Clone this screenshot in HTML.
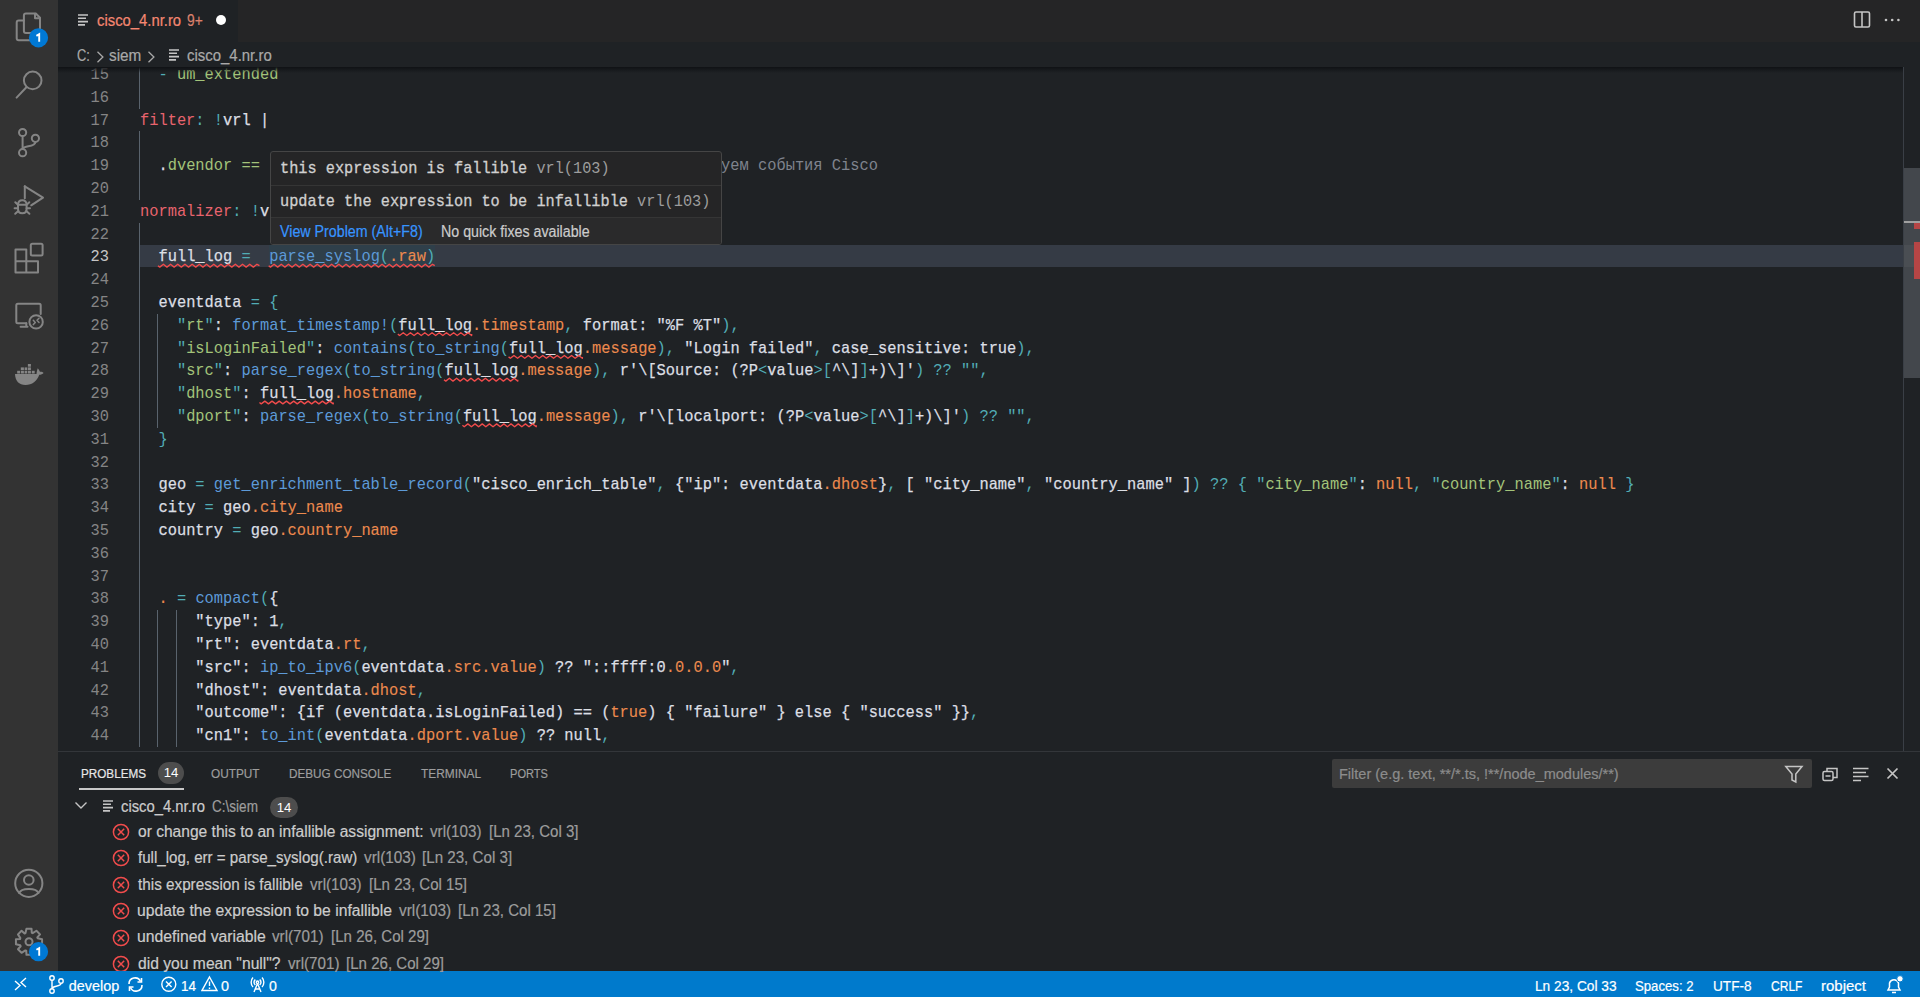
<!DOCTYPE html>
<html><head><meta charset="utf-8"><title>cisco_4.nr.ro</title>
<style>
*{margin:0;padding:0;box-sizing:border-box}
html,body{width:1920px;height:997px;overflow:hidden;background:#1f2225;font-family:"Liberation Sans",sans-serif;position:relative}
.a{position:absolute}
#act{left:0;top:0;width:58px;height:971px;background:#333333}
#tabbar{left:58px;top:0;width:1862px;height:41.5px;background:#252526}
#tab{left:58px;top:0;width:180px;height:41.5px;background:#1f2225}
.ttl{font-size:15.6px;color:#f48771;white-space:pre}
#crumbs{left:58px;top:41.5px;width:1862px;height:25.5px;background:#1f2225;font-size:15.6px;color:#a9a9a9;white-space:pre}
#editor{left:0;top:67px;width:1920px;height:684px;overflow:hidden}
#editor > *{margin-top:-67px}
#shadow{left:58px;top:67px;width:1845px;height:6px;background:linear-gradient(#101215,rgba(16,18,21,0))}
#nums{left:0;top:0;width:109px;height:751px}
.nm{position:absolute;left:0;height:22.8px;line-height:22.8px;font-family:"Liberation Mono",monospace;font-size:16.8px;color:#858585;text-align:right;width:109px;transform:translateY(1px) scaleX(0.9154);transform-origin:100% 0}
.nm.cur{color:#c6c6c6}
#code{left:139.5px;top:0;width:1764px;height:751px}
.ln{position:absolute;left:0;height:22.8px;line-height:22.8px;font-family:"Liberation Mono",monospace;font-size:16.4px;white-space:pre;color:#d7dae0;transform:translateY(0.7px) scaleX(0.93766);transform-origin:0 0;}
.w{color:#dcdfe4;-webkit-text-stroke:0.25px #dcdfe4}.c{color:#52adb5}.g{color:#a3c47a}.b{color:#5d9ad8}.o{color:#ec8a4e;-webkit-text-stroke:0.1px #ec8a4e}.r{color:#e8646e}.k{color:#7f848e}
.gd{position:absolute;width:1px;background:#59636d}
#curline{left:139.5px;top:245.4px;width:1763.5px;height:21.8px;background:#353b45}
#hovrange{left:268.7px;top:245.4px;width:166.1px;height:21.8px;background:#2f3f4a}
#scrollv{left:1903px;top:67px;width:17px;height:684px;border-left:1px solid #3a3f46}
#slider{left:1904px;top:168px;width:16px;height:210px;background:#43474c}
#hover{left:269.5px;top:150.5px;width:452px;height:94px;background:#252526;border:1px solid #454545;border-radius:3px;overflow:hidden}
.hrow{position:absolute;left:9.5px;font-family:"Liberation Mono",monospace;font-size:16.4px;color:#d0d0d0;white-space:pre;transform:scaleX(0.9309);transform-origin:0 0;-webkit-text-stroke:0.3px #d0d0d0}
.hrow .gry{-webkit-text-stroke:0}
.hsep{position:absolute;left:0;width:100%;height:1px;background:#353535}
.gry{color:#9d9d9d}
#hstat{left:0;top:66px;width:100%;height:27px;background:#2a2a2b;font-size:15px;white-space:pre}
#panel{left:58px;top:751px;width:1862px;height:220px;background:#1f2225;border-top:1px solid #33363a}
.ptab{position:absolute;top:12px;font-size:13.2px;color:#9d9d9d;white-space:pre;letter-spacing:0.1px}
.badge{position:absolute;background:#4d4d4d;color:#fff;border-radius:11px;text-align:center;font-size:13.2px}
.prow{position:absolute;left:0;height:26.4px;line-height:26.4px;font-size:15.6px;color:#cccccc;white-space:pre}
.prow .d{color:#9d9d9d}
#status{left:0;top:971px;width:1920px;height:26px;background:#007acc;color:#fff;font-size:14.4px;white-space:pre}
.st{position:absolute;top:0;height:26px;line-height:27px}
.tx{position:absolute;white-space:pre;line-height:normal;transform-origin:0 0;font-family:"Liberation Sans",sans-serif;-webkit-text-stroke:0.2px currentColor}
</style></head><body>
<div class="a" id="act">
<svg width="58" height="971" viewBox="0 0 58 971" style="position:absolute;left:0;top:0" fill="none" stroke="#858585" stroke-width="2" stroke-linejoin="round" stroke-linecap="round">
 <!-- explorer -->
 <path d="M23.9 20.6 H18.7 Q16.7 20.6 16.7 22.6 V38.2 Q16.7 40.2 18.7 40.2 H30"/>
 <path d="M25.9 13.5 H35.8 L40 17.8 V31 Q40 33 38 33 H25.9 Q23.9 33 23.9 31 V15.5 Q23.9 13.5 25.9 13.5 Z"/>
 <path d="M35 13.8 V18.2 H39.8"/>
 <circle cx="38.5" cy="37.8" r="9.6" fill="#0078d4" stroke="none"/>
 <!-- search -->
 <circle cx="32.7" cy="80.4" r="8.8"/>
 <path d="M26.4 87.2 L16.6 97.6"/>
 <!-- scm -->
 <circle cx="22.6" cy="132.5" r="3.6"/>
 <circle cx="22.6" cy="152.7" r="3.6"/>
 <circle cx="35.4" cy="138.3" r="3.6"/>
 <path d="M22.6 136.1 V149.1"/>
 <path d="M35.4 141.9 C35.4 147.5 22.6 145 22.6 149.1"/>
 <!-- debug -->
 <path d="M24.8 186.3 L43 197.6 L31.2 205.3"/>
 <path d="M24.8 186.3 V198.3"/>
 <path d="M18 205 C18 201.6 19.6 200.3 22.3 200.3 C25 200.3 26.6 201.6 26.6 205 V209 C26.6 212 25 213.3 22.3 213.3 C19.6 213.3 18 212 18 209 Z"/>
 <path d="M18 204.7 H26.6 M15.3 202.3 L18.2 205 M29.3 202.3 L26.4 205 M14.6 208.2 H18 M26.6 208.2 H30 M15.2 213.8 L18.3 211 M29.4 213.8 L26.3 211"/>
 <!-- extensions -->
 <path d="M15.5 249.5 H26.3 V261.3 H38 V272.5 H15.5 Z M15.5 261.3 H26.3 V272.5"/>
 <rect x="30.8" y="243.8" width="11.8" height="11.8" rx="1.5"/>
 <!-- remote explorer -->
 <path d="M26.3 323.3 H17.8 Q16.3 323.3 16.3 321.8 V305.2 Q16.3 303.7 17.8 303.7 H39.2 Q40.7 303.7 40.7 305.2 V314"/>
 <path d="M20.6 326.8 H27.5 M26.3 323.3 V326.8"/>
 <circle cx="36.1" cy="321.9" r="6.7"/>
 <path d="M33.3 320.3 L35.3 322.4 L33.3 324.6 M39 318.2 L37 320.3 L39 322.4" stroke-width="1.5"/>
 <!-- docker -->
 <path d="M15 374 H36.5 C36.8 371.5 37.2 369.5 37.8 368.2 C38.8 369.2 39.5 370.5 39.9 371.8 C41.4 371.6 42.8 372 43.6 372.9 C42.6 374.1 41 374.6 39.3 374.7 C37 381 32.2 385 25.5 385 C19 385 15.3 381 15 374 Z" fill="#858585" stroke="none"/>
 <g fill="#858585" stroke="none"><rect x="17.2" y="370.8" width="2.8" height="2.7"/><rect x="20.8" y="367.4" width="3.1" height="2.7"/><rect x="20.8" y="370.8" width="3.1" height="2.7"/><rect x="24.6" y="367.4" width="2.6" height="2.7"/><rect x="24.6" y="370.8" width="2.6" height="2.7"/><rect x="27.9" y="364" width="3" height="2.7"/><rect x="27.9" y="367.4" width="3" height="2.7"/><rect x="27.9" y="370.8" width="3" height="2.7"/><rect x="31.8" y="370.8" width="2.9" height="2.7"/></g>
 <!-- accounts -->
 <circle cx="28.8" cy="883.3" r="13.6"/>
 <circle cx="28.8" cy="880" r="4.8"/>
 <path d="M19.2 893 C21 887.5 36.6 887.5 38.4 893"/>
 <!-- gear -->
 <path d="M25.48 933.08 L26.46 928.74 L31.54 928.74 L31.75 932.81 L32.67 933.15 L36.44 930.77 L40.03 934.36 L37.30 937.39 L37.72 938.28 L42.06 939.26 L42.06 944.34 L37.99 944.55 L37.65 945.47 L40.03 949.24 L36.44 952.83 L33.41 950.10 L32.52 950.52 L31.54 954.86 L26.46 954.86 L26.25 950.79 L25.33 950.45 L21.56 952.83 L17.97 949.24 L20.70 946.21 L20.28 945.32 L15.94 944.34 L15.94 939.26 L20.01 939.05 L20.35 938.13 L17.97 934.36 L21.56 930.77 L24.59 933.50 Z"/>
 <circle cx="29" cy="941.8" r="3.5"/>
 <circle cx="38.5" cy="951.7" r="9.6" fill="#0078d4" stroke="none"/>
</svg>
<svg class="a" style="left:0;top:0" width="58" height="971"><path d="M36.4 35.9 L39.2 34.2 V41.8" fill="none" stroke="#fff" stroke-width="1.9" stroke-linejoin="miter"/><path d="M36.4 949.8 L39.2 948.1 V955.7" fill="none" stroke="#fff" stroke-width="1.9" stroke-linejoin="miter"/></svg>

</div>

<div class="a" id="tabbar"></div>
<div class="a" id="tab">
 <svg class="a" style="left:20px;top:14px" width="11" height="12"><path d="M0 1h10M0 4.3h8M0 7.6h10M0 10.9h7" stroke="#c5c5c5" stroke-width="1.6"/></svg>
 
 <div class="a" style="left:157.7px;top:15px;width:10px;height:10px;border-radius:50%;background:#ffffff"></div>
</div>
<svg class="a" style="left:1850px;top:8px" width="60" height="26" fill="none" stroke="#c5c5c5" stroke-width="1.6">
 <rect x="4.5" y="4" width="15" height="15" rx="1.5"/><path d="M12 4v15"/>
 <circle cx="36" cy="12" r="1.3" fill="#c5c5c5" stroke="none"/><circle cx="42.2" cy="12" r="1.3" fill="#c5c5c5" stroke="none"/><circle cx="48.4" cy="12" r="1.3" fill="#c5c5c5" stroke="none"/>
</svg>

<div class="a" id="crumbs">
 
 <svg class="a" style="left:36px;top:7px" width="12" height="16"><path d="M3.5 2.8 L8.9 8 L3.5 13.2" fill="none" stroke="#a9a9a9" stroke-width="1.3"/></svg>
 
 <svg class="a" style="left:87px;top:7px" width="12" height="16"><path d="M3.5 2.8 L8.9 8 L3.5 13.2" fill="none" stroke="#a9a9a9" stroke-width="1.3"/></svg>
 <svg class="a" style="left:111px;top:7px" width="11" height="12"><path d="M0 1h10M0 4.3h8M0 7.6h10M0 10.9h7" stroke="#c5c5c5" stroke-width="1.6"/></svg>
 
</div>

<div class="a" id="editor">
 <div class="a" id="curline"></div>
 <div class="a" id="hovrange"></div>
 <div class="a" id="scrollv"></div>
 <div class="a" id="slider"></div>
 <div class="a" style="left:1904px;top:245.4px;width:16px;height:21.8px;background:rgba(255,255,255,0.04)"></div>
 <div class="a" style="left:1904px;top:221px;width:16px;height:2px;background:#a0a0a0"></div>
 <div class="a" style="left:1914px;top:223px;width:6px;height:6px;background:#b64545"></div>
 <div class="a" style="left:1914px;top:242px;width:6px;height:37px;background:#b64545"></div>
 <div class="gd" style="left:139px;top:63.00px;height:45.60px"></div>
<div class="gd" style="left:139px;top:131.40px;height:68.40px"></div>
<div class="gd" style="left:139px;top:222.60px;height:524.40px"></div>
<div class="gd" style="left:157px;top:313.80px;height:114.00px"></div>
<div class="gd" style="left:157px;top:610.20px;height:136.80px"></div>
<div class="gd" style="left:176px;top:610.20px;height:136.80px"></div>
 <div class="a" id="nums">
<div class="nm" style="top:63.00px">15</div>
<div class="nm" style="top:85.80px">16</div>
<div class="nm" style="top:108.60px">17</div>
<div class="nm" style="top:131.40px">18</div>
<div class="nm" style="top:154.20px">19</div>
<div class="nm" style="top:177.00px">20</div>
<div class="nm" style="top:199.80px">21</div>
<div class="nm" style="top:222.60px">22</div>
<div class="nm cur" style="top:245.40px">23</div>
<div class="nm" style="top:268.20px">24</div>
<div class="nm" style="top:291.00px">25</div>
<div class="nm" style="top:313.80px">26</div>
<div class="nm" style="top:336.60px">27</div>
<div class="nm" style="top:359.40px">28</div>
<div class="nm" style="top:382.20px">29</div>
<div class="nm" style="top:405.00px">30</div>
<div class="nm" style="top:427.80px">31</div>
<div class="nm" style="top:450.60px">32</div>
<div class="nm" style="top:473.40px">33</div>
<div class="nm" style="top:496.20px">34</div>
<div class="nm" style="top:519.00px">35</div>
<div class="nm" style="top:541.80px">36</div>
<div class="nm" style="top:564.60px">37</div>
<div class="nm" style="top:587.40px">38</div>
<div class="nm" style="top:610.20px">39</div>
<div class="nm" style="top:633.00px">40</div>
<div class="nm" style="top:655.80px">41</div>
<div class="nm" style="top:678.60px">42</div>
<div class="nm" style="top:701.40px">43</div>
<div class="nm" style="top:724.20px">44</div>
 </div>
 <div class="a" id="code">
<div class="ln" style="top:63.00px">  <span class="c">-</span> <span class="g">um_extended</span></div>
<div class="ln" style="top:85.80px"></div>
<div class="ln" style="top:108.60px"><span class="r">filter</span><span class="c">:</span> <span class="c">!</span><span class="w">vrl</span> <span class="w">|</span></div>
<div class="ln" style="top:131.40px"></div>
<div class="ln" style="top:154.20px">  <span class="w">.</span><span class="g">dvendor</span> <span class="g">==</span>                                                  <span class="k">уем события Cisco</span></div>
<div class="ln" style="top:177.00px"></div>
<div class="ln" style="top:199.80px"><span class="r">normalizer</span><span class="c">:</span> <span class="c">!</span><span class="w">vrl |</span></div>
<div class="ln" style="top:222.60px"></div>
<div class="ln" style="top:245.40px">  <span class="w">full_log</span> <span class="c">=</span>  <span class="b">parse_syslog</span><span class="c">(</span><span class="o">.raw</span><span class="c">)</span></div>
<div class="ln" style="top:268.20px"></div>
<div class="ln" style="top:291.00px">  <span class="w">eventdata</span> <span class="c">=</span> <span class="c">{</span></div>
<div class="ln" style="top:313.80px">    <span class="c">&quot;</span><span class="g">rt</span><span class="c">&quot;</span><span class="w">:</span> <span class="b">format_timestamp!</span><span class="c">(</span><span class="w">full_log</span><span class="o">.timestamp</span><span class="c">,</span><span class="w"> format: &quot;%F %T&quot;</span><span class="c">),</span></div>
<div class="ln" style="top:336.60px">    <span class="c">&quot;</span><span class="g">isLoginFailed</span><span class="c">&quot;</span><span class="w">:</span> <span class="b">contains</span><span class="c">(</span><span class="b">to_string</span><span class="c">(</span><span class="w">full_log</span><span class="o">.message</span><span class="c">),</span><span class="w"> &quot;Login failed&quot;</span><span class="c">,</span><span class="w"> case_sensitive: true</span><span class="c">),</span></div>
<div class="ln" style="top:359.40px">    <span class="c">&quot;</span><span class="g">src</span><span class="c">&quot;</span><span class="w">:</span> <span class="b">parse_regex</span><span class="c">(</span><span class="b">to_string</span><span class="c">(</span><span class="w">full_log</span><span class="o">.message</span><span class="c">),</span><span class="w"> r&#x27;\[Source: (?P</span><span class="c">&lt;</span><span class="w">value</span><span class="c">&gt;[</span><span class="w">^\]</span><span class="c">]</span><span class="w">+)\]&#x27;</span><span class="c">)</span> <span class="c">?? &quot;&quot;,</span></div>
<div class="ln" style="top:382.20px">    <span class="c">&quot;</span><span class="g">dhost</span><span class="c">&quot;</span><span class="w">:</span> <span class="w">full_log</span><span class="o">.hostname</span><span class="c">,</span></div>
<div class="ln" style="top:405.00px">    <span class="c">&quot;</span><span class="g">dport</span><span class="c">&quot;</span><span class="w">:</span> <span class="b">parse_regex</span><span class="c">(</span><span class="b">to_string</span><span class="c">(</span><span class="w">full_log</span><span class="o">.message</span><span class="c">),</span><span class="w"> r&#x27;\[localport: (?P</span><span class="c">&lt;</span><span class="w">value</span><span class="c">&gt;[</span><span class="w">^\]</span><span class="c">]</span><span class="w">+)\]&#x27;</span><span class="c">)</span> <span class="c">?? &quot;&quot;,</span></div>
<div class="ln" style="top:427.80px">  <span class="c">}</span></div>
<div class="ln" style="top:450.60px"></div>
<div class="ln" style="top:473.40px">  <span class="w">geo</span> <span class="c">=</span> <span class="b">get_enrichment_table_record</span><span class="c">(</span><span class="w">&quot;cisco_enrich_table&quot;</span><span class="c">,</span> <span class="w">{&quot;ip&quot;: eventdata</span><span class="o">.dhost</span><span class="w">}</span><span class="c">,</span><span class="w"> [ &quot;city_name&quot;</span><span class="c">,</span><span class="w"> &quot;country_name&quot; ]</span><span class="c">)</span> <span class="c">??</span> <span class="c">{</span> <span class="c">&quot;</span><span class="g">city_name</span><span class="c">&quot;</span><span class="w">:</span> <span class="o">null</span><span class="c">,</span> <span class="c">&quot;</span><span class="g">country_name</span><span class="c">&quot;</span><span class="w">:</span> <span class="o">null</span> <span class="c">}</span></div>
<div class="ln" style="top:496.20px">  <span class="w">city</span> <span class="c">=</span> <span class="w">geo</span><span class="o">.city_name</span></div>
<div class="ln" style="top:519.00px">  <span class="w">country</span> <span class="c">=</span> <span class="w">geo</span><span class="o">.country_name</span></div>
<div class="ln" style="top:541.80px"></div>
<div class="ln" style="top:564.60px"></div>
<div class="ln" style="top:587.40px">  <span class="o">.</span> <span class="c">=</span> <span class="b">compact</span><span class="c">(</span><span class="w">{</span></div>
<div class="ln" style="top:610.20px">      <span class="w">&quot;type&quot;: 1</span><span class="c">,</span></div>
<div class="ln" style="top:633.00px">      <span class="w">&quot;rt&quot;: eventdata</span><span class="o">.rt</span><span class="c">,</span></div>
<div class="ln" style="top:655.80px">      <span class="w">&quot;src&quot;: </span><span class="b">ip_to_ipv6</span><span class="c">(</span><span class="w">eventdata</span><span class="o">.src.value</span><span class="c">)</span><span class="w"> ?? &quot;::ffff:0</span><span class="o">.0.0.0</span><span class="w">&quot;</span><span class="c">,</span></div>
<div class="ln" style="top:678.60px">      <span class="w">&quot;dhost&quot;: eventdata</span><span class="o">.dhost</span><span class="c">,</span></div>
<div class="ln" style="top:701.40px">      <span class="w">&quot;outcome&quot;: {if (eventdata.isLoginFailed) == (</span><span class="o">true</span><span class="w">) { &quot;failure&quot; } else { &quot;success&quot; }}</span><span class="c">,</span></div>
<div class="ln" style="top:724.20px">      <span class="w">&quot;cn1&quot;: </span><span class="b">to_int</span><span class="c">(</span><span class="w">eventdata</span><span class="o">.dport.value</span><span class="c">)</span><span class="w"> ?? null</span><span class="c">,</span></div>
 </div>
 <svg class="a" style="left:0;top:0" width="1920" height="751" fill="none" stroke="#f14c4c" stroke-width="1.35" stroke-linejoin="round">
  <path d="M157.95 265.70 L159.75 267.10 L163.35 264.30 L166.95 267.10 L170.55 264.30 L174.15 267.10 L177.75 264.30 L181.35 267.10 L184.95 264.30 L188.55 267.10 L192.15 264.30 L195.75 267.10 L199.35 264.30 L202.95 267.10 L206.55 264.30 L210.15 267.10 L213.75 264.30 L217.35 267.10 L220.95 264.30 L224.55 267.10 L228.15 264.30 L231.75 267.10 L235.35 264.30 L238.95 267.10 L242.55 264.30 L246.15 267.10 L249.75 264.30 L253.35 267.10 L256.95 264.30 L259.45 265.70"/>
<path d="M268.67 265.70 L270.47 267.10 L274.07 264.30 L277.67 267.10 L281.27 264.30 L284.87 267.10 L288.47 264.30 L292.07 267.10 L295.67 264.30 L299.27 267.10 L302.87 264.30 L306.47 267.10 L310.07 264.30 L313.67 267.10 L317.27 264.30 L320.87 267.10 L324.47 264.30 L328.07 267.10 L331.67 264.30 L335.27 267.10 L338.87 264.30 L342.47 267.10 L346.07 264.30 L349.67 267.10 L353.27 264.30 L356.87 267.10 L360.47 264.30 L364.07 267.10 L367.67 264.30 L371.27 267.10 L374.87 264.30 L378.47 267.10 L382.07 264.30 L385.67 267.10 L389.27 264.30 L392.87 267.10 L396.47 264.30 L400.07 267.10 L403.67 264.30 L407.27 267.10 L410.87 264.30 L414.47 267.10 L418.07 264.30 L421.67 267.10 L425.27 264.30 L428.87 267.10 L432.47 264.30 L434.75 265.70"/>
<path d="M397.84 334.10 L399.64 335.50 L403.24 332.70 L406.84 335.50 L410.44 332.70 L414.04 335.50 L417.64 332.70 L421.24 335.50 L424.84 332.70 L428.44 335.50 L432.04 332.70 L435.64 335.50 L439.24 332.70 L442.84 335.50 L446.44 332.70 L450.04 335.50 L453.64 332.70 L457.24 335.50 L460.84 332.70 L464.44 335.50 L468.04 332.70 L471.64 335.50 L471.66 334.10"/>
<path d="M508.56 356.90 L510.36 358.30 L513.96 355.50 L517.56 358.30 L521.16 355.50 L524.76 358.30 L528.36 355.50 L531.96 358.30 L535.56 355.50 L539.16 358.30 L542.76 355.50 L546.36 358.30 L549.96 355.50 L553.56 358.30 L557.16 355.50 L560.76 358.30 L564.36 355.50 L567.96 358.30 L571.56 355.50 L575.16 358.30 L578.76 355.50 L582.36 358.30 L582.38 356.90"/>
<path d="M443.98 379.70 L445.78 381.10 L449.38 378.30 L452.98 381.10 L456.58 378.30 L460.18 381.10 L463.78 378.30 L467.38 381.10 L470.98 378.30 L474.58 381.10 L478.18 378.30 L481.78 381.10 L485.38 378.30 L488.98 381.10 L492.58 378.30 L496.18 381.10 L499.78 378.30 L503.38 381.10 L506.98 378.30 L510.58 381.10 L514.18 378.30 L517.78 381.10 L517.79 379.70"/>
<path d="M259.45 402.50 L261.25 403.90 L264.85 401.10 L268.45 403.90 L272.05 401.10 L275.65 403.90 L279.25 401.10 L282.85 403.90 L286.45 401.10 L290.05 403.90 L293.65 401.10 L297.25 403.90 L300.85 401.10 L304.45 403.90 L308.05 401.10 L311.65 403.90 L315.25 401.10 L318.85 403.90 L322.45 401.10 L326.05 403.90 L329.65 401.10 L333.25 403.90 L333.26 402.50"/>
<path d="M462.43 425.30 L464.23 426.70 L467.83 423.90 L471.43 426.70 L475.03 423.90 L478.63 426.70 L482.23 423.90 L485.83 426.70 L489.43 423.90 L493.03 426.70 L496.63 423.90 L500.23 426.70 L503.83 423.90 L507.43 426.70 L511.03 423.90 L514.63 426.70 L518.23 423.90 L521.83 426.70 L525.43 423.90 L529.03 426.70 L532.63 423.90 L536.23 426.70 L536.24 425.30"/>
 </svg>
</div>
<div class="a" id="shadow"></div>

<div class="a" id="hover">
 <div class="hrow" style="top:1.6px;height:34px;line-height:31px">this expression is fallible <span class="gry">vrl(103)</span></div>
 <div class="hsep" style="top:33.5px"></div>
 <div class="hrow" style="top:34.4px;height:32px;line-height:31px">update the expression to be infallible <span class="gry">vrl(103)</span></div>
 <div class="hsep" style="top:65.5px"></div>
 <div class="a" id="hstat"></div>
</div>

<div class="a" id="panel">
 
 <div class="badge" style="left:100px;top:10px;width:26px;height:22px;line-height:22px">14</div>
 <div class="a" style="left:20.5px;top:35.5px;width:105.5px;height:2px;background:#c8c8c8"></div>
 
 
 
 
 <div class="a" style="left:1274px;top:7px;width:480px;height:29px;background:#3c3c3c;border-radius:2px"></div>
 
 <svg class="a" style="left:1720px;top:10px" width="190" height="24" fill="none" stroke="#c5c5c5" stroke-width="1.5">
  <path d="M7.8 4.5 H24 L17.8 12 V20 L14 18 V12 Z"/>
  <rect x="45" y="9.5" width="10" height="9" rx="1.5"/><path d="M49 9.5 V6.5 H59 V15.5 H55"/><path d="M47.5 14 H52.5"/>
  <path d="M75 6.5H90.5M75 10.5H88M75 14.5H90.5M75 18.5H83"/>
  <path d="M109.5 6.5 L119.5 16.5 M119.5 6.5 L109.5 16.5" stroke-width="1.7"/>
 </svg>
 <!-- tree -->
 <svg class="a" style="left:16px;top:47px" width="14" height="14"><path d="M1.5 3.5 L7 9 L12.5 3.5" fill="none" stroke="#c5c5c5" stroke-width="1.4"/></svg>
 <svg class="a" style="left:44.5px;top:48px" width="11" height="12"><path d="M0 1h10M0 4.3h8M0 7.6h10M0 10.9h7" stroke="#c5c5c5" stroke-width="1.6"/></svg>
 
 <div class="badge" style="left:212px;top:45px;width:28px;height:21px;line-height:21px">14</div>
 <svg class="a" style="left:53.5px;top:71.00px" width="18" height="18"><circle cx="9" cy="9" r="7.6" fill="none" stroke="#f14c4c" stroke-width="1.5"/><path d="M5.8 5.8 L12.2 12.2 M12.2 5.8 L5.8 12.2" stroke="#f14c4c" stroke-width="1.5"/></svg>
<svg class="a" style="left:53.5px;top:97.40px" width="18" height="18"><circle cx="9" cy="9" r="7.6" fill="none" stroke="#f14c4c" stroke-width="1.5"/><path d="M5.8 5.8 L12.2 12.2 M12.2 5.8 L5.8 12.2" stroke="#f14c4c" stroke-width="1.5"/></svg>
<svg class="a" style="left:53.5px;top:123.80px" width="18" height="18"><circle cx="9" cy="9" r="7.6" fill="none" stroke="#f14c4c" stroke-width="1.5"/><path d="M5.8 5.8 L12.2 12.2 M12.2 5.8 L5.8 12.2" stroke="#f14c4c" stroke-width="1.5"/></svg>
<svg class="a" style="left:53.5px;top:150.20px" width="18" height="18"><circle cx="9" cy="9" r="7.6" fill="none" stroke="#f14c4c" stroke-width="1.5"/><path d="M5.8 5.8 L12.2 12.2 M12.2 5.8 L5.8 12.2" stroke="#f14c4c" stroke-width="1.5"/></svg>
<svg class="a" style="left:53.5px;top:176.60px" width="18" height="18"><circle cx="9" cy="9" r="7.6" fill="none" stroke="#f14c4c" stroke-width="1.5"/><path d="M5.8 5.8 L12.2 12.2 M12.2 5.8 L5.8 12.2" stroke="#f14c4c" stroke-width="1.5"/></svg>
<svg class="a" style="left:53.5px;top:203.00px" width="18" height="18"><circle cx="9" cy="9" r="7.6" fill="none" stroke="#f14c4c" stroke-width="1.5"/><path d="M5.8 5.8 L12.2 12.2 M12.2 5.8 L5.8 12.2" stroke="#f14c4c" stroke-width="1.5"/></svg>
</div>

<div class="a" id="status">
 <svg class="a" style="left:12px;top:5px" width="16" height="16" fill="none" stroke="#fff" stroke-width="1.4"><path d="M3 14 L8 9.5 L3 5 M14 2 L9 6.5 L14 11"/></svg>
 <svg class="a" style="left:47px;top:3px" width="20" height="20" fill="none" stroke="#fff" stroke-width="1.4"><circle cx="5" cy="4" r="2.2"/><circle cx="5" cy="17" r="2.2"/><circle cx="14" cy="7" r="2.2"/><path d="M5 6.2 V14.8 M14 9.2 C14 13 5 11.5 5 14.8"/></svg>
 
 <svg class="a" style="left:126px;top:5px" width="19" height="17" fill="none" stroke="#fff" stroke-width="1.6"><path d="M3 8 A6 6 0 0 1 14.5 5.5 M16 9 A6 6 0 0 1 4.5 11.5"/><path d="M15.5 2 V6 H11.5 M3.5 15 V11 H7.5"/></svg>
 <svg class="a" style="left:160px;top:4px" width="18" height="18" fill="none" stroke="#fff" stroke-width="1.4"><circle cx="8.8" cy="9.3" r="7"/><path d="M6 6.5 L11.6 12.1 M11.6 6.5 L6 12.1"/></svg>
 
 <svg class="a" style="left:200.5px;top:4px" width="18" height="18" fill="none" stroke="#fff" stroke-width="1.4"><path d="M8.5 2 L16 15.5 H1 Z M8.5 6.5 V11 M8.5 12.5 V14"/></svg>
 
 <svg class="a" style="left:249px;top:3px" width="18" height="20" fill="none" stroke="#fff" stroke-width="1.4"><path d="M4 3.5 A7 7 0 0 0 4 13 M13 3.5 A7 7 0 0 1 13 13 M6.3 5.5 A4 4 0 0 0 6.3 11 M10.7 5.5 A4 4 0 0 1 10.7 11"/><circle cx="8.5" cy="8.2" r="1.2"/><path d="M8.5 9.5 L5 18 M8.5 9.5 L12 18 M6 15 H11"/></svg>
 
 
 
 
 
 
 <svg class="a" style="left:1885px;top:3px" width="20" height="20" fill="none" stroke="#fff" stroke-width="1.5"><path d="M3 16 H15 L13.5 13 V9 A4.8 4.8 0 0 0 4.5 9 V13 Z M7 18.5 H11"/><circle cx="15" cy="4.8" r="3.2" fill="#fff" stroke="#007acc" stroke-width="1"/></svg>
</div>
<div class="tx" style="left:96.60px;top:12.30px;font-size:15.6px;color:#f48771;transform:scaleX(0.9511)">cisco_4.nr.ro</div>
<div class="tx" style="left:186.90px;top:12.30px;font-size:15.6px;color:#d9806c;transform:scaleX(0.8889)">9+</div>
<div class="tx" style="left:77.10px;top:46.60px;font-size:15.6px;color:#a9a9a9;transform:scaleX(0.8267)">C:</div>
<div class="tx" style="left:109.20px;top:46.60px;font-size:15.6px;color:#a9a9a9;transform:scaleX(0.9812)">siem</div>
<div class="tx" style="left:186.80px;top:46.60px;font-size:15.6px;color:#a9a9a9;transform:scaleX(0.9580)">cisco_4.nr.ro</div>
<div class="tx" style="left:279.70px;top:223.10px;font-size:15.6px;color:#3794ff;transform:scaleX(0.9135)">View Problem (Alt+F8)</div>
<div class="tx" style="left:440.89px;top:223.10px;font-size:15.6px;color:#cccccc;transform:scaleX(0.9123)">No quick fixes available</div>
<div class="tx" style="left:80.81px;top:765.50px;font-size:13.2px;color:#e7e7e7;transform:scaleX(0.8875)">PROBLEMS</div>
<div class="tx" style="left:210.80px;top:765.50px;font-size:13.2px;color:#9d9d9d;transform:scaleX(0.8963)">OUTPUT</div>
<div class="tx" style="left:288.51px;top:765.50px;font-size:13.2px;color:#9d9d9d;transform:scaleX(0.8895)">DEBUG CONSOLE</div>
<div class="tx" style="left:420.60px;top:765.50px;font-size:13.2px;color:#9d9d9d;transform:scaleX(0.9015)">TERMINAL</div>
<div class="tx" style="left:509.96px;top:765.50px;font-size:13.2px;color:#9d9d9d;transform:scaleX(0.8386)">PORTS</div>
<div class="tx" style="left:1339.29px;top:765.75px;font-size:14.4px;color:#8c8c8c;transform:scaleX(1.0076)">Filter (e.g. text, **/*.ts, !**/node_modules/**)</div>
<div class="tx" style="left:120.70px;top:797.90px;font-size:15.6px;color:#cccccc;transform:scaleX(0.9500)">cisco_4.nr.ro</div>
<div class="tx" style="left:211.80px;top:797.90px;font-size:15.6px;color:#9d9d9d;transform:scaleX(0.8692)">C:\siem</div>
<div class="tx" style="left:68.75px;top:977.50px;font-size:14.4px;color:#ffffff;transform:scaleX(1.0000)">develop</div>
<div class="tx" style="left:181.07px;top:977.50px;font-size:14.4px;color:#ffffff;transform:scaleX(0.9333)">14</div>
<div class="tx" style="left:221.00px;top:977.50px;font-size:14.4px;color:#ffffff;transform:scaleX(1.0000)">0</div>
<div class="tx" style="left:268.75px;top:977.50px;font-size:14.4px;color:#ffffff;transform:scaleX(0.9813)">0</div>
<div class="tx" style="left:1534.65px;top:977.50px;font-size:14.4px;color:#ffffff;transform:scaleX(0.9524)">Ln 23, Col 33</div>
<div class="tx" style="left:1635.18px;top:977.50px;font-size:14.4px;color:#ffffff;transform:scaleX(0.9151)">Spaces: 2</div>
<div class="tx" style="left:1713.06px;top:977.50px;font-size:14.4px;color:#ffffff;transform:scaleX(0.9450)">UTF-8</div>
<div class="tx" style="left:1771.00px;top:977.50px;font-size:14.4px;color:#ffffff;transform:scaleX(0.8378)">CRLF</div>
<div class="tx" style="left:1820.66px;top:977.50px;font-size:14.4px;color:#ffffff;transform:scaleX(1.0419)">robject</div>
<div class="tx" style="left:137.90px;top:822.70px;font-size:15.6px;color:#cccccc;transform:scaleX(0.9986)">or change this to an infallible assignment:</div>
<div class="tx" style="left:430.40px;top:822.70px;font-size:15.6px;color:#9d9d9d;transform:scaleX(0.9731)">vrl(103)</div>
<div class="tx" style="left:488.84px;top:822.70px;font-size:15.6px;color:#9d9d9d;transform:scaleX(0.9648)">[Ln 23, Col 3]</div>
<div class="tx" style="left:137.90px;top:849.10px;font-size:15.6px;color:#cccccc;transform:scaleX(0.9677)">full_log, err = parse_syslog(.raw)</div>
<div class="tx" style="left:363.90px;top:849.10px;font-size:15.6px;color:#9d9d9d;transform:scaleX(0.9827)">vrl(103)</div>
<div class="tx" style="left:422.33px;top:849.10px;font-size:15.6px;color:#9d9d9d;transform:scaleX(0.9714)">[Ln 23, Col 3]</div>
<div class="tx" style="left:137.90px;top:875.50px;font-size:15.6px;color:#cccccc;transform:scaleX(0.9792)">this expression is fallible</div>
<div class="tx" style="left:310.30px;top:875.50px;font-size:15.6px;color:#9d9d9d;transform:scaleX(0.9750)">vrl(103)</div>
<div class="tx" style="left:368.83px;top:875.50px;font-size:15.6px;color:#9d9d9d;transform:scaleX(0.9660)">[Ln 23, Col 15]</div>
<div class="tx" style="left:136.89px;top:901.90px;font-size:15.6px;color:#cccccc;transform:scaleX(1.0071)">update the expression to be infallible</div>
<div class="tx" style="left:399.00px;top:901.90px;font-size:15.6px;color:#9d9d9d;transform:scaleX(0.9865)">vrl(103)</div>
<div class="tx" style="left:457.54px;top:901.90px;font-size:15.6px;color:#9d9d9d;transform:scaleX(0.9650)">[Ln 23, Col 15]</div>
<div class="tx" style="left:136.89px;top:928.30px;font-size:15.6px;color:#cccccc;transform:scaleX(1.0111)">undefined variable</div>
<div class="tx" style="left:272.30px;top:928.30px;font-size:15.6px;color:#9d9d9d;transform:scaleX(0.9750)">vrl(701)</div>
<div class="tx" style="left:330.73px;top:928.30px;font-size:15.6px;color:#9d9d9d;transform:scaleX(0.9660)">[Ln 26, Col 29]</div>
<div class="tx" style="left:137.90px;top:954.70px;font-size:15.6px;color:#cccccc;transform:scaleX(1.0042)">did you mean &quot;null&quot;?</div>
<div class="tx" style="left:287.80px;top:954.70px;font-size:15.6px;color:#9d9d9d;transform:scaleX(0.9731)">vrl(701)</div>
<div class="tx" style="left:346.23px;top:954.70px;font-size:15.6px;color:#9d9d9d;transform:scaleX(0.9660)">[Ln 26, Col 29]</div>
</body></html>
